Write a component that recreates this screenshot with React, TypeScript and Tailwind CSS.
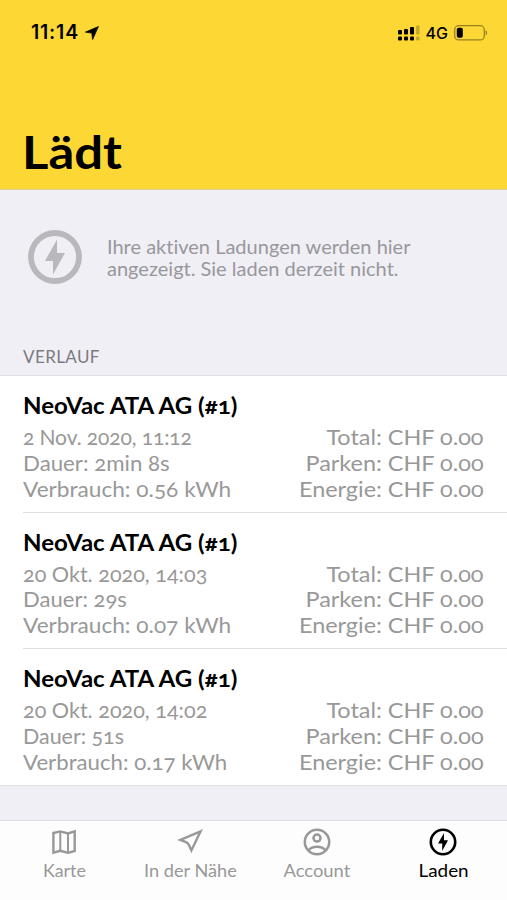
import type { ReactNode } from "react";

const SESSIONS: {
  date: string;
  dateClass: string;
  duration: string;
  durationClass: string;
  usage: string;
  usageClass: string;
}[] = [
  {
    date: "2 Nov. 2020, 11:12",
    dateClass: "tracking-[-0.1px]",
    duration: "Dauer: 2min 8s",
    durationClass: "scale-x-[1.060]",
    usage: "Verbrauch: 0.56 kWh",
    usageClass: "scale-x-[1.078]",
  },
  {
    date: "20 Okt. 2020, 14:03",
    dateClass: "scale-x-[1.028]",
    duration: "Dauer: 29s",
    durationClass: "scale-x-[1.050]",
    usage: "Verbrauch: 0.07 kWh",
    usageClass: "scale-x-[1.078]",
  },
  {
    date: "20 Okt. 2020, 14:02",
    dateClass: "scale-x-[1.028]",
    duration: "Dauer: 51s",
    durationClass: "scale-x-[1.020]",
    usage: "Verbrauch: 0.17 kWh",
    usageClass: "scale-x-[1.058]",
  },
];

function BoltIcon({ className }: { className?: string }) {
  return (
    <svg viewBox="0 0 54 54" className={className} fill="none">
      <circle cx="27" cy="27" r="24" stroke="currentColor" strokeWidth="5.8" />
      <path d="M29 9.5 17 31h8v13.500L37 23h-8z" fill="currentColor" />
    </svg>
  );
}

function StatusBar() {
  return (
    <div className="flex h-[65px] items-center justify-between pl-[31px] pr-[19px]">
      <div className="flex items-center gap-1.5 font-['Inter',sans-serif] text-[19.500px] font-semibold tracking-[0.8px]">
        11:14
        <svg viewBox="0 0 14 14" className="size-3.5" fill="currentColor" stroke="currentColor" strokeWidth="0.8" strokeLinejoin="round">
          <path d="M13.400.6.5 6.100l6.300 1 .8 6.400z" />
        </svg>
      </div>
      <div className="flex items-center">
        <svg viewBox="0 0 22 16" className="mr-[-1px] h-4 w-[22px]" fill="currentColor">
          <rect x="0" y="5" width="4" height="4.5" rx="1" />
          <rect x="6" y="4" width="4" height="5.5" rx="1" />
          <rect x="12" y="2" width="4" height="7.5" rx="1" />
          <rect x="18" y="0.5" width="3.6" height="9" rx="1" opacity="0.22" />
          <rect x="0" y="11.5" width="4" height="4" rx="1" />
          <rect x="6" y="11.5" width="4" height="4" rx="1" />
          <rect x="12" y="11.5" width="4" height="4" rx="1" />
          <rect x="18" y="11.5" width="3.6" height="4" rx="1" opacity="0.22" />
        </svg>
        <span className="ml-[7px] font-['Inter',sans-serif] text-[16px] font-medium">4G</span>
        <svg viewBox="0 0 34 16" className="ml-[6px] h-4 w-[34px]">
          <rect x="0.7" y="0.7" width="29.6" height="14.2" rx="4" fill="none" stroke="#000" strokeOpacity="0.4" strokeWidth="1.3" />
          <rect x="2.8" y="2.8" width="6" height="10" rx="1.8" />
          <path d="M31.600 5.300c2 .6 2 4.400 0 5z" opacity="0.4" />
        </svg>
      </div>
    </div>
  );
}

function Tab({ label, className, children }: { label: string; className: string; children: ReactNode }) {
  return (
    <div className="flex w-[126.400px] flex-col items-center text-[#989898] last:text-black">
      <div className="flex h-7 items-center">{children}</div>
      <span className={`mt-[3px] whitespace-nowrap text-[17px] leading-6 ${className}`}>{label}</span>
    </div>
  );
}

export default function App() {
  return (
    <div className="flex h-[900px] w-[507px] flex-col overflow-hidden bg-[#f0eff5] font-['Lato',sans-serif] oldstyle-nums text-black">
      <header className="flex h-[190px] flex-col justify-between border-b border-[#dccf9a] bg-[#fdd835]">
        <StatusBar />
        <h1 className="mb-[9px] ml-[22px] origin-left scale-x-[1.130] text-[45px] font-bold leading-[56px]">Lädt</h1>
      </header>

      <section className="flex h-[134px] items-center gap-[25px] pl-7 text-[#98979c]">
        <BoltIcon className="size-[54px] text-[#b9b8bd]" />
        <p className="origin-left scale-x-[1.053] whitespace-nowrap pt-px text-[19px] leading-[22px] [font-variant-ligatures:no-common-ligatures]">
          Ihre aktiven Ladungen werden hier
          <br />
          angezeigt. Sie laden derzeit nicht.
        </p>
      </section>

      <h2 className="flex h-[52px] items-end border-b border-[#e0dfe4] pb-1.5 pl-[23px] text-[17px] leading-6 tracking-[0.4px] text-[#7b7a80]">
        VERLAUF
      </h2>

      <ul className="border-b border-[#e0dfe4] bg-white pl-[23px]">
        {SESSIONS.map((s) => (
          <li key={s.usage} className="h-[136.600px] whitespace-nowrap border-b border-[#e0e0e0] pr-[23px] pt-4 last:h-[136px] last:border-0">
            <h3 className="mb-1 w-max origin-left scale-x-[1.095] text-[22px] font-bold leading-7">NeoVac ATA AG (#1)</h3>
            <div className="flex justify-between text-[21px] leading-[25.800px] text-[#989898]">
              <div>
                <p className={`w-max origin-left ${s.dateClass}`}>{s.date}</p>
                <p className={`w-max origin-left ${s.durationClass}`}>{s.duration}</p>
                <p className={`w-max origin-left ${s.usageClass}`}>{s.usage}</p>
              </div>
              <div className="origin-right scale-x-[1.115] text-right">
                <p>Total: CHF 0.00</p>
                <p>Parken: CHF 0.00</p>
                <p>Energie: CHF 0.00</p>
              </div>
            </div>
          </li>
        ))}
      </ul>

      <nav className="mt-auto flex h-[80px] border-t border-[#dddce1] bg-[#fdfdfd] pl-[0.800px] pt-[7px]">
        <Tab label="Karte" className="scale-x-[1.050]">
          <svg viewBox="0 0 26 26" className="size-[26px]" fill="none" stroke="currentColor" strokeWidth="2.400">
            <path d="M2.400 4 9.300 2.400l7.700 2 6.700-2V22l-6.700 1.800-7.700-2-6.900 1.800z" />
            <path d="M9.300 2.400v19.400M17 4.400v19.400" strokeWidth="2" />
          </svg>
        </Tab>
        <Tab label="In der Nähe" className="scale-x-[1.070]">
          <svg viewBox="0 0 26 26" className="size-[26px]" fill="none" stroke="currentColor" strokeWidth="2.400">
            <path d="M23.600 2.300 3.300 10.900l5.200 1.900q2.700 1 3.700 3.700l2.200 5z" />
          </svg>
        </Tab>
        <Tab label="Account" className="scale-x-[1.080]">
          <svg viewBox="0 0 28 28" className="size-7" fill="none" stroke="currentColor" strokeWidth="2.500">
            <circle cx="14" cy="14" r="12.200" />
            <circle cx="14" cy="10.100" r="3.500" />
            <path d="M5.500 22.200c4-4.700 13-4.700 17 0" />
          </svg>
        </Tab>
        <Tab label="Laden" className="scale-x-[1.110]">
          <svg viewBox="0 0 28 28" className="size-7" fill="none">
            <circle cx="14" cy="14" r="12.200" stroke="currentColor" strokeWidth="2.600" />
            <path d="M15 5 9 15.500h4.200V23L19 12.200h-4z" fill="currentColor" />
          </svg>
        </Tab>
      </nav>
    </div>
  );
}
